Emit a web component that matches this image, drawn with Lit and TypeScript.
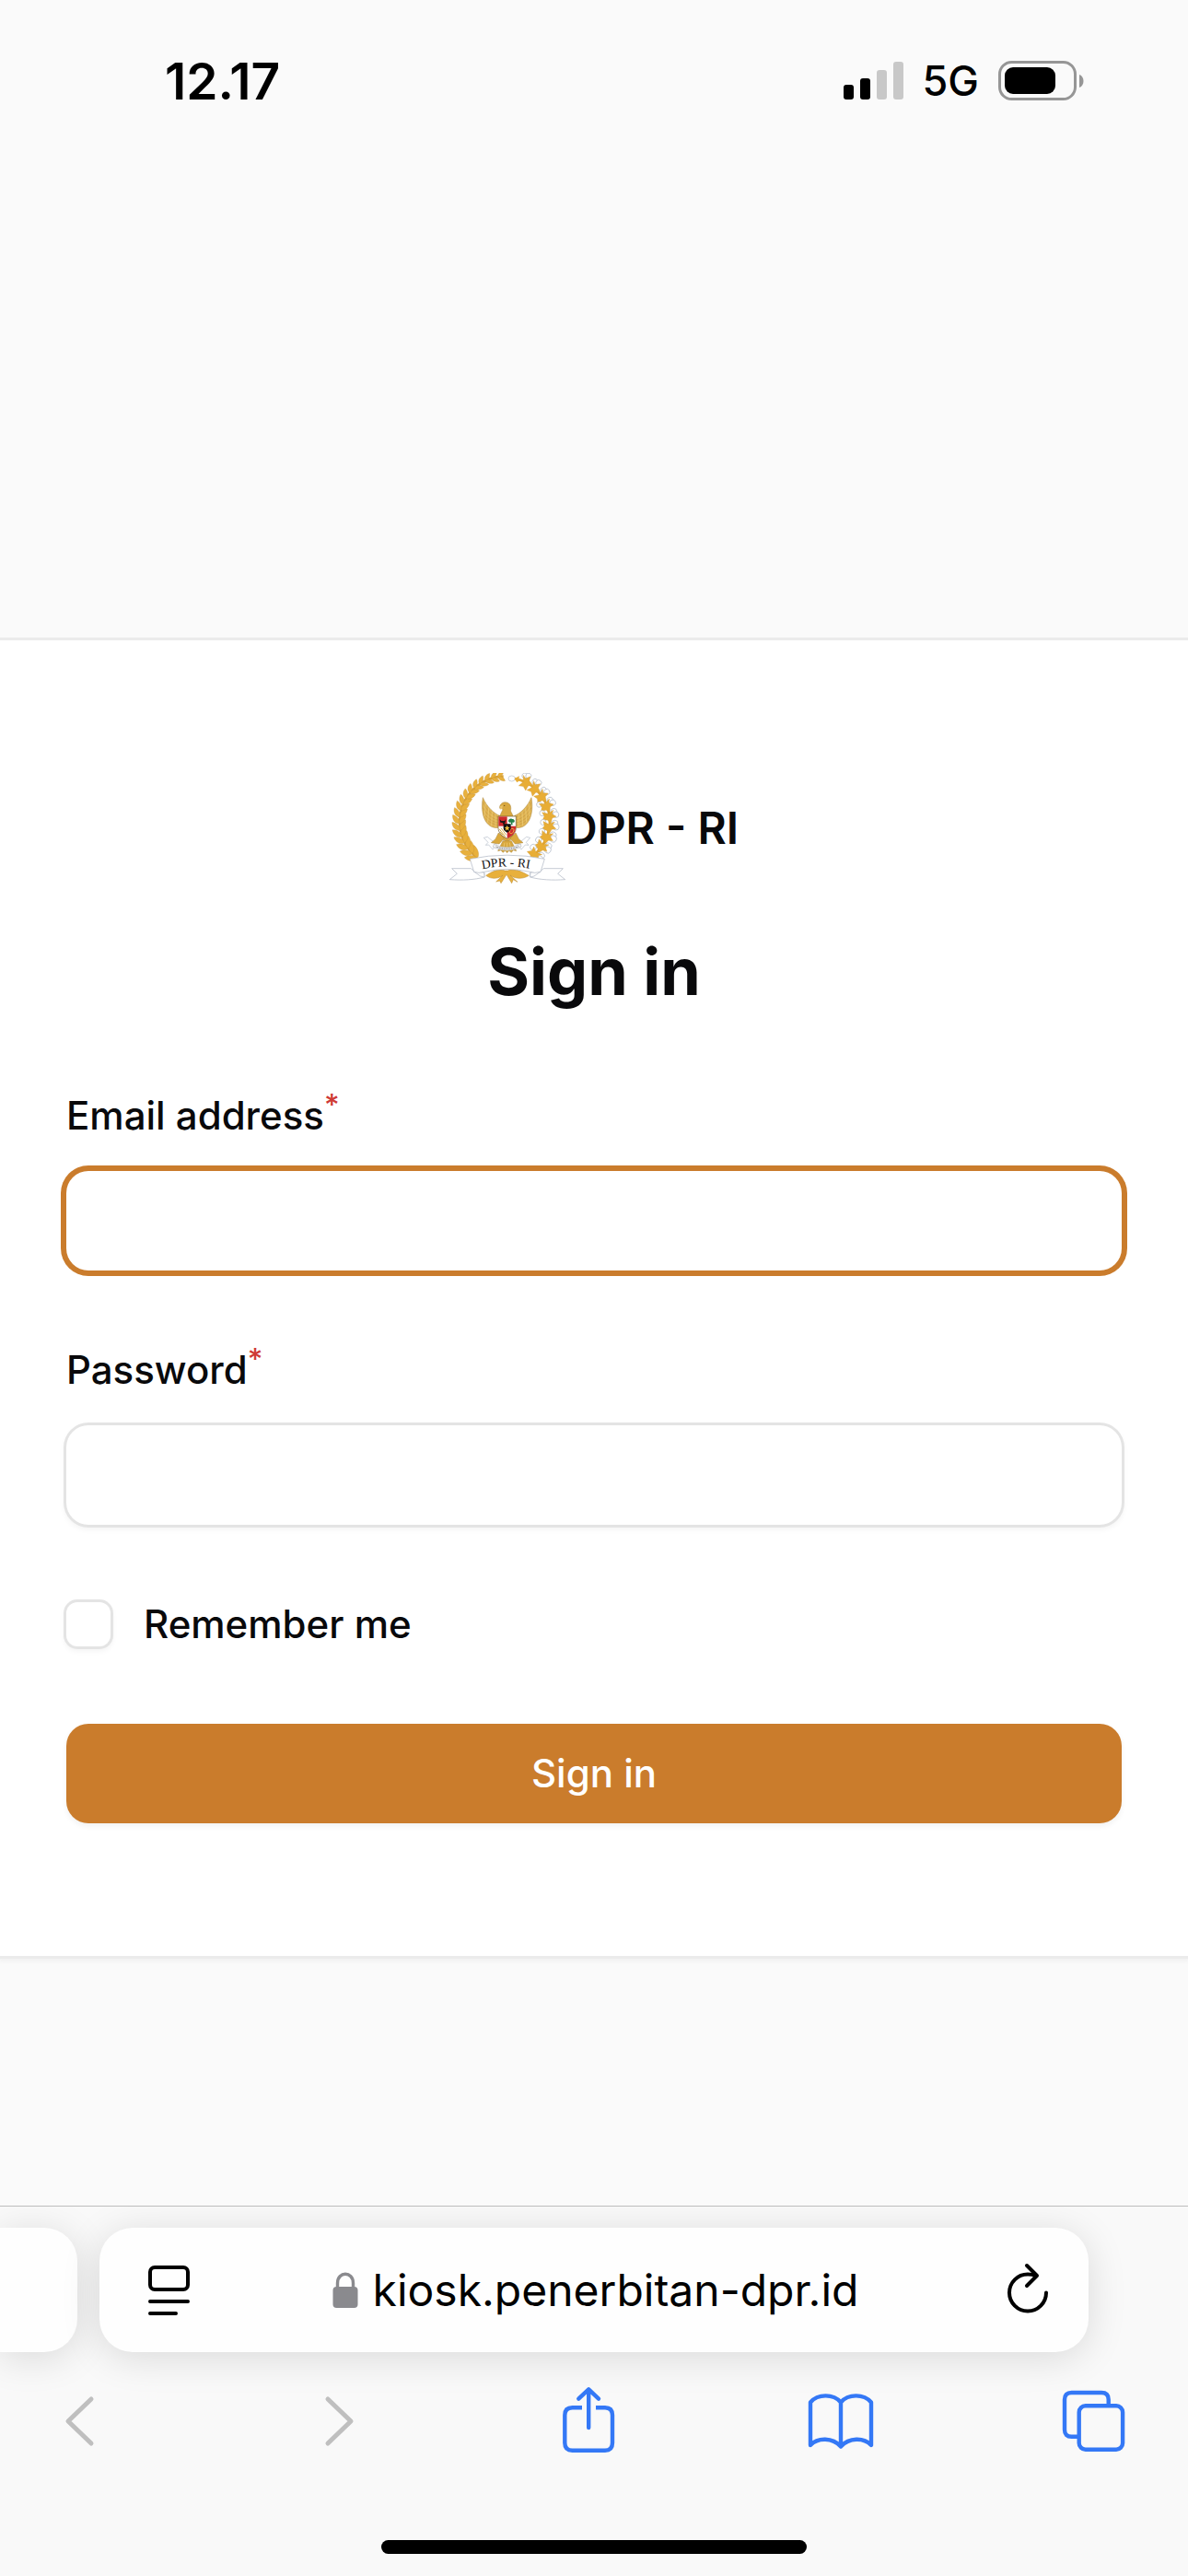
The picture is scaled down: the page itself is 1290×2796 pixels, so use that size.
import { LitElement, html, svg, css } from "lit";
import { customElement, property } from "lit/decorators.js";

const CX = 205;
const CY = 185;
const polar = (deg: number, r: number) => ({
  x: CX + r * Math.cos((deg * Math.PI) / 180),
  y: CY + r * Math.sin((deg * Math.PI) / 180),
});

/* Emblem: rice wreath, cotton wreath, eagle with shield, ribbon. */
@customElement("dpr-emblem")
class DprEmblem extends LitElement {
  static styles = css`
    :host {
      display: block;
    }
    .emblem {
      display: block;
      width: 126px;
      height: 120px;
    }
    .name {
      font-family: "Liberation Serif", serif;
      font-size: 41px;
      font-weight: 400;
      fill: #111;
    }
  `;

  private rice() {
    const pairs = 17;
    return Array.from({ length: pairs }, (_, i) => {
      const t = i / (pairs - 1);
      const deg = 127 + t * 134;
      const p = polar(deg, 148 - 2 * t);
      const len = 43 - 17 * t;
      const w = 14 - 5 * t;
      const leaf = `M0 0C${len * 0.2} ${-w} ${len * 0.7} ${-w} ${len} 0C${len * 0.7} ${w * 0.7} ${len * 0.2} ${w * 0.7} 0 0Z`;
      return svg`<g transform="translate(${p.x} ${p.y})" fill="#e8b03c" stroke="#c39238" stroke-width="1">
        <path d=${leaf} transform="rotate(${deg + 90 - 36})"></path>
        <path d=${leaf} transform="rotate(${deg + 90 + 36})"></path>
      </g>`;
    });
  }

  private cotton() {
    const count = 9;
    return Array.from({ length: count }, (_, i) => {
      const t = i / (count - 1);
      const deg = -62 + t * 110;
      const p = polar(deg, 142);
      const ball = 9 + 2 * t;
      return svg`<g transform="translate(${p.x} ${p.y}) rotate(${deg})">
        <g fill="#fff" stroke="#aeb7c4" stroke-width="2">
          <circle cx="20" cy="-13" r=${ball}></circle>
          <circle cx="25" cy="-2" r=${ball}></circle>
          ${t > 0.3 ? svg`<circle cx="-18" cy="-12" r=${ball - 1}></circle>` : ""}
        </g>
        <path d="M19 -18L13 -6L26 4L12 8L6 22L-5 12L-21 12L-13 -1L-18 -15L0 -8Z" fill="#e8ad35" stroke="#cf9a3a" stroke-width="1"></path>
      </g>`;
    });
  }

  private wing() {
    return svg`
      <path d="M133 107C127 140 131 178 152 196C166 208 184 208 192 200L188 166C171 160 146 138 133 107Z" fill="#dfb352" stroke="#a8843c" stroke-width="1.5"></path>
      <path d="M134 122C142 146 164 166 188 172M133 140C145 162 166 178 189 182M136 158C148 176 168 188 190 191M143 177C156 190 174 197 190 198" fill="none" stroke="#bd9243" stroke-width="1.6"></path>
      <path d="M141 126L139 168M152 142L149 188M163 153L161 199M174 161L174 203" fill="none" stroke="#f2d27c" stroke-width="2"></path>`;
  }

  render() {
    return html`<svg class="emblem" viewBox="24 27 378 360" role="img" aria-label="DPR - RI">
      <path d="M115 303A148 148 0 0 1 200 38" fill="none" stroke="#d8a136" stroke-width="8"></path>
      ${this.rice()}
      <path d="M236 45A142 142 0 0 1 294 298" fill="none" stroke="#e0a431" stroke-width="8"></path>
      ${this.cotton()}
      <ellipse cx="227" cy="45" rx="11" ry="9" fill="#fff" stroke="#b4bcc8" stroke-width="2"></ellipse>
      <path d="M236 45L252 37L250 46L266 56L250 53L244 58Z" fill="#e8ad35"></path>

      <g fill="#fff" stroke="#b4bcc8" stroke-width="2">
        <path d="M136 238L148 235L178 260L165 276L152 261L142 262L150 253Z"></path>
        <path d="M287 238L275 235L245 260L258 276L271 261L282 262L274 253Z"></path>
      </g>
      ${this.wing()}
      <g transform="translate(424 0) scale(-1 1)">${this.wing()}</g>
      <path d="M188 136C191 124 203 119 214 124C224 128 226 142 223 150L234 172L232 238L212 252L190 238L186 172L196 150C200 146 197 141 188 142Z" fill="#d9a83f" stroke="#a8843c" stroke-width="1.5"></path>
      <path d="M189 136L198 132L196 142L191 147Z" fill="#e9c36a"></path>
      <circle cx="203" cy="133" r="2" fill="#5b4420"></circle>
      <path d="M184 222L174 242L160 254L186 258L202 240ZM240 222L250 242L264 254L238 258L222 240Z" fill="#dba93c" stroke="#a8843c" stroke-width="1.5"></path>
      <path d="M198 248L226 248L242 281L232 278L226 286L218 280L212 287L206 280L198 286L192 278L182 281Z" fill="#d8a73d" stroke="#a8843c" stroke-width="1.5"></path>
      <path d="M204 254L199 279M212 254V281M220 254L225 279" stroke="#f2d27c" stroke-width="2"></path>
      <path d="M169 259Q212 280 256 258L258 267Q212 291 166 268Z" fill="#f7f7f7" stroke="#9aa0aa" stroke-width="1.5"></path>
      <path d="M176 267Q212 281 250 266" fill="none" stroke="#555" stroke-width="3" stroke-dasharray="3 2"></path>

      <path d="M183 168H241V205C241 222 228 234 212 240C196 234 183 222 183 205Z" fill="#fff" stroke="#6b5527" stroke-width="2"></path>
      <path d="M184 169H212V200H184Z" fill="#cf2a2c"></path>
      <path d="M212 200H240V206C240 221 228 233 212 239Z" fill="#cf2a2c"></path>
      <path d="M188 178L193 183L204 183L208 177L206 188L201 196L197 189L190 188Z" fill="#221616"></path>
      <path d="M216 184C216 177 224 174 228 177C236 176 239 185 234 188L229 188L230 196H224L225 188H219Z" fill="#24824a"></path>
      <path d="M187 210L206 234M192 206L209 229M189 219L199 229" stroke="#d8b04a" stroke-width="3"></path>
      <ellipse cx="227" cy="216" rx="6" ry="9" transform="rotate(30 227 216)" fill="none" stroke="#e9b84a" stroke-width="2.5"></ellipse>
      <path d="M200 193H224V207C224 214 218 218 212 221C206 218 200 214 200 207Z" fill="#111"></path>
      <path d="M212 197L214.500 203.500L221 204L216 208L218 215L212 211L206 215L208 208L203 204L209.500 203.500Z" fill="#f2c23c"></path>

      <path d="M205 345C184 336 160 350 143 361C160 374 184 372 198 360L176 381L188 378L192 386L210 358L227 386L232 374L246 382L222 360C240 374 266 372 283 361C262 350 236 334 214 345Z" fill="#e8b03c" stroke="#b98a35" stroke-width="1.5"></path>
      <g fill="#fff" stroke="#aab2bf" stroke-width="2" stroke-linejoin="round">
        <path d="M94 338H32L49 355L25 374C66 377 106 375 138 366L138 352L104 346Z"></path>
        <path d="M331 338H394L377 355L401 374C360 377 319 375 287 366L287 352L321 346Z"></path>
        <path d="M137 351L104 348L125 363L138 366ZM288 351L321 348L300 363L287 366Z"></path>
        <path d="M91 307Q212 282 334 307L321 349Q300 355 288 349Q212 332 137 349Q120 355 104 349Z"></path>
      </g>
      <path id="arc" d="M131 340Q212 322 300 341" fill="none"></path>
      <text class="name"><textPath href="#arc">DPR - RI</textPath></text>
    </svg>`;
  }
}

@customElement("status-bar")
class StatusBar extends LitElement {
  static styles = css`
    :host {
      display: flex;
      justify-content: space-between;
      align-items: center;
      height: 144px;
      padding: 32px 112px 0 179px;
      box-sizing: border-box;
      color: #000;
    }
    .time {
      font-size: 55px;
      line-height: 60px;
      font-weight: 600;
    }
    .signals {
      display: flex;
      align-items: center;
      gap: 21px;
    }
    .network {
      font-size: 45px;
      line-height: 60px;
      font-weight: 500;
    }
    svg {
      display: block;
    }
  `;

  render() {
    return html`
      <span class="time">12.17</span>
      <div class="signals">
        <svg width="65" height="45" viewBox="0 0 65 45" role="img" aria-label="Signal">
          <rect x="0" y="26" width="11" height="16" rx="3"></rect>
          <rect x="18" y="19" width="11" height="23" rx="3"></rect>
          <rect x="36" y="10" width="11" height="32" rx="3" fill="#c8c8c8"></rect>
          <rect x="54" y="1" width="11" height="41" rx="3" fill="#c8c8c8"></rect>
        </svg>
        <span class="network">5G</span>
        <svg width="94" height="45" viewBox="0 0 94 45" role="img" aria-label="Battery">
          <rect x="1.500" y="1.500" width="82" height="40" rx="13" fill="none" stroke="#969696" stroke-width="3"></rect>
          <rect x="7" y="7" width="55" height="29" rx="9"></rect>
          <path d="M88 15C94 17 94 27 88 29Z" fill="#969696"></path>
        </svg>
      </div>
    `;
  }
}

@customElement("text-field")
class TextField extends LitElement {
  @property() label = "";
  @property() type = "text";
  @property({ type: Boolean }) active = false;

  static styles = css`
    :host {
      display: flex;
      flex-direction: column;
      gap: 24px;
    }
    .label {
      font-size: 42px;
      line-height: 72px;
      font-weight: 500;
      color: #09090b;
    }
    .mark {
      font-size: 32px;
      line-height: 0;
      color: #cf3a35;
    }
    .input {
      display: block;
      width: 100%;
      height: 108px;
      box-sizing: border-box;
      padding: 18px 36px;
      border: 0;
      border-radius: 24px;
      outline: none;
      background: #fff;
      font: inherit;
      font-size: 48px;
      color: #09090b;
      box-shadow: 0 0 0 3px #e4e4e4, 0 3px 6px 2px rgba(0, 0, 0, 0.05);
    }
    .input.active,
    .input:focus {
      box-shadow: 0 0 0 6px #ca7c2c;
    }
  `;

  render() {
    return html`
      <label class="label" for="field">${this.label}<sup class="mark">*</sup></label>
      <input
        class="input ${this.active ? "active" : ""}"
        id="field"
        type=${this.type}
        required
      />
    `;
  }
}

@customElement("sign-in-card")
class SignInCard extends LitElement {
  static styles = css`
    :host {
      display: block;
      padding: 144px 72px;
      background: #fff;
      color: #09090b;
      box-shadow: 0 0 0 3px #ebebeb, 0 3px 6px 2px rgba(0, 0, 0, 0.05);
    }
    .header {
      display: flex;
      flex-direction: column;
      align-items: center;
      gap: 48px;
      margin-bottom: 72px;
    }
    .brand {
      display: flex;
      align-items: center;
      font-size: 48px;
      line-height: 60px;
      font-weight: 600;
    }
    .title {
      margin: 0;
      font-size: 70px;
      line-height: 96px;
      font-weight: 700;
    }
    .form {
      display: flex;
      flex-direction: column;
      gap: 72px;
    }
    .remember {
      display: flex;
      align-items: center;
      gap: 36px;
      font-size: 42px;
      line-height: 72px;
      font-weight: 500;
    }
    .check {
      appearance: none;
      width: 48px;
      height: 48px;
      margin: 0;
      border-radius: 12px;
      background: #fff;
      box-shadow: 0 0 0 3px #e4e4e4, 0 3px 6px 2px rgba(0, 0, 0, 0.05);
    }
    .check:checked {
      background: #ca7c2c;
    }
    .submit {
      width: 100%;
      padding: 18px 36px;
      border: 0;
      border-radius: 24px;
      background: #ca7c2c;
      color: #fff;
      font: inherit;
      font-size: 42px;
      line-height: 72px;
      font-weight: 500;
      box-shadow: 0 3px 6px rgba(0, 0, 0, 0.06);
    }
  `;

  render() {
    return html`
      <header class="header">
        <div class="brand"><dpr-emblem></dpr-emblem><span>DPR - RI</span></div>
        <h1 class="title">Sign in</h1>
      </header>
      <form class="form" @submit=${(e: Event) => e.preventDefault()}>
        <text-field label="Email address" type="email" active></text-field>
        <text-field label="Password" type="password"></text-field>
        <label class="remember"><input class="check" type="checkbox" />Remember me</label>
        <button class="submit" type="submit">Sign in</button>
      </form>
    `;
  }
}

@customElement("browser-bar")
class BrowserBar extends LitElement {
  static styles = css`
    :host {
      display: block;
      overflow: hidden;
      border-top: 1px solid #bdbdbd;
      background: #f9f9f9;
      color: #000;
    }
    .tabs {
      display: flex;
      gap: 24px;
      padding: 23px 108px 0 0;
    }
    .tab {
      height: 135px;
      border-radius: 36px;
      background: #fefefe;
      box-shadow: 0 6px 42px rgba(0, 0, 0, 0.13);
    }
    .previous {
      flex: none;
      width: 84px;
      border-radius: 0 36px 36px 0;
    }
    .address {
      flex: 1;
      display: grid;
      grid-template-columns: 1fr auto 1fr;
      align-items: center;
      padding: 0 42px 0 51px;
      box-sizing: border-box;
    }
    .site {
      display: flex;
      align-items: center;
      gap: 16px;
      padding-right: 6px;
      font-size: 48px;
      line-height: 60px;
    }
    .icon {
      display: block;
      padding: 0;
      border: 0;
      background: none;
      color: inherit;
    }
    .reload {
      justify-self: end;
    }
    svg {
      display: block;
      fill: none;
      stroke: currentColor;
      stroke-width: 4;
      stroke-linecap: round;
      stroke-linejoin: round;
    }
    .lock {
      color: #8a8a8e;
    }
    .tools {
      display: flex;
      justify-content: space-between;
      padding: 37px 66px 95px 50px;
      color: #3478f6;
    }
    .tools svg {
      stroke-width: 4.4;
    }
    .tools .off svg {
      stroke-width: 5;
    }
    .off {
      color: #bfbfbf;
    }
    .home {
      width: 462px;
      height: 15px;
      margin: 0 auto 24px;
      border-radius: 8px;
      background: #000;
    }
  `;

  private tool(label: string, shape: unknown, off = false) {
    return html`<button class="icon ${off ? "off" : ""}" type="button" aria-label=${label} ?disabled=${off}>
      <svg width="72" height="72" viewBox="0 0 72 72">${shape}</svg>
    </button>`;
  }

  render() {
    return html`
      <div class="tabs">
        <div class="tab previous"></div>
        <div class="tab address">
          <button class="icon" type="button" aria-label="Page menu">
            <svg width="50" height="56" viewBox="0 0 50 56">
              <rect x="4" y="3" width="41" height="24" rx="5"></rect>
              <path d="M4 40H45M4 53H32"></path>
            </svg>
          </button>
          <span class="site">
            <svg class="lock" width="28" height="40" viewBox="0 0 28 40" role="img" aria-label="Secure">
              <path d="M5.500 18V12C5.500 -1 22.500 -1 22.500 12V18" stroke-width="3.400"></path>
              <rect x="0.500" y="16" width="27" height="23" rx="4" fill="currentColor" stroke="none"></rect>
            </svg>
            <span>kiosk.penerbitan-dpr.id</span>
          </span>
          <button class="icon reload" type="button" aria-label="Reload">
            <svg width="48" height="60" viewBox="0 0 48 60">
              <path d="M44 32.500A20 20 0 1 1 24 12.500Q29 12.500 32 14"></path>
              <path d="M23 3L34 14L23 25"></path>
            </svg>
          </button>
        </div>
      </div>
      <nav class="tools">
        ${this.tool("Back", svg`<path d="M49 14L24 38L49 62"></path>`, true)}
        ${this.tool("Forward", svg`<path d="M30 14L55 38L30 62"></path>`, true)}
        ${this.tool(
          "Share",
          svg`<path stroke-linecap="butt" d="M31 23.300H20.500Q12.300 23.300 12.300 31.500V61.500Q12.300 69.700 20.500 69.700H56Q64 69.700 64 61.500V31.500Q64 23.300 56 23.300H46"></path>
          <path d="M38.200 45V3.500M27.300 13.700L38.200 3.300L49 13.700"></path>`
        )}
        ${this.tool(
          "Bookmarks",
          svg`<path d="M36 17.500C28 8 11 8 3 17.500V64C11 55.500 27 55.500 36 65.500C45 55.500 61 55.500 69 64V17.500C61 8 44 8 36 17.500V65"></path>`
        )}
        ${this.tool(
          "Tabs",
          svg`<path stroke-linecap="butt" d="M18 54.700H11.500Q4 54.700 4 47.200V14.500Q4 7 11.500 7H44Q51.700 7 51.700 14.500V20"></path>
          <rect x="19.700" y="21.300" width="47.400" height="47.400" rx="7"></rect>`
        )}
      </nav>
      <div class="home"></div>
    `;
  }
}

@customElement("app-root")
class AppRoot extends LitElement {
  static styles = css`
    :host {
      display: flex;
      flex-direction: column;
      min-height: 100vh;
      background: #fafafa;
      font-family: Inter, "Liberation Sans", sans-serif;
    }
    .page {
      flex: 1;
      padding: 551px 0 268px;
    }
  `;

  render() {
    return html`
      <status-bar></status-bar>
      <main class="page"><sign-in-card></sign-in-card></main>
      <browser-bar></browser-bar>
    `;
  }
}
